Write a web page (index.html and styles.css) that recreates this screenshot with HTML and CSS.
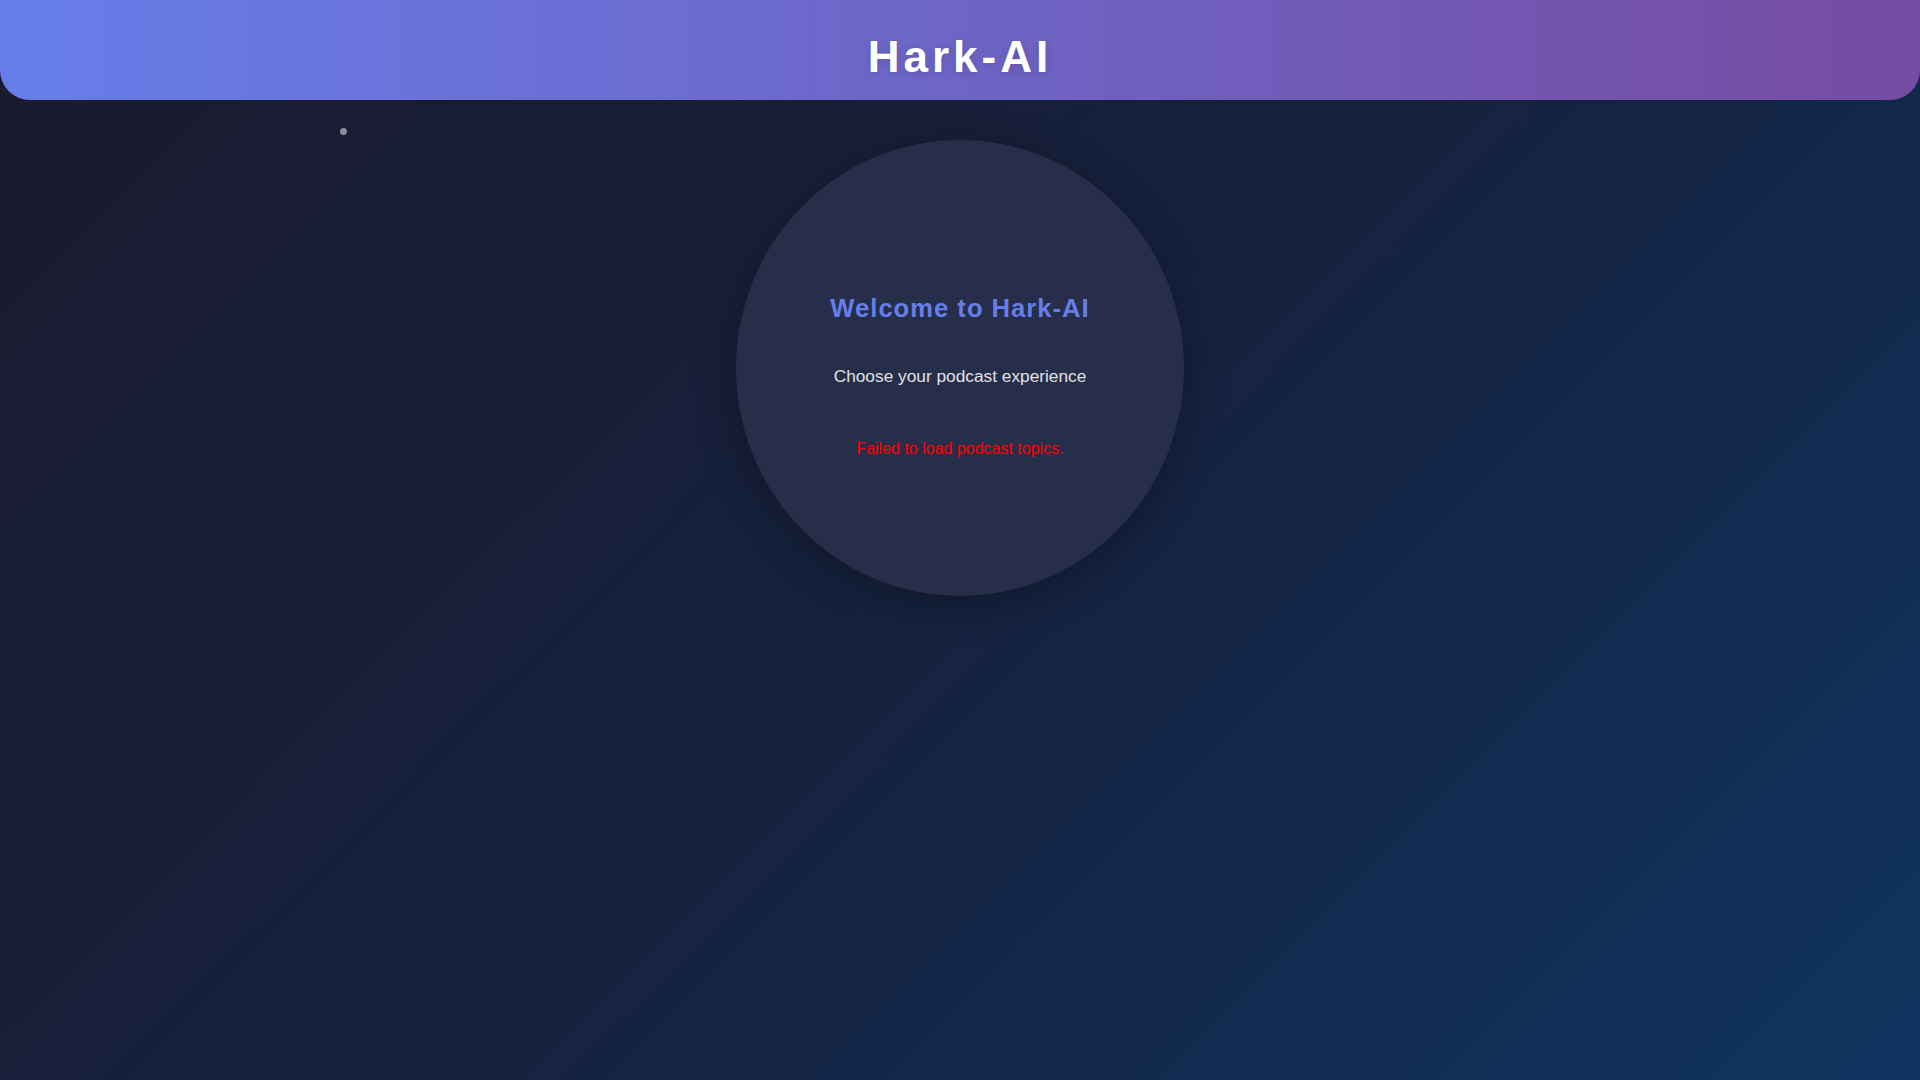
FILE: index.html
```html
<!DOCTYPE html>
<html lang="en">
<head>
<meta charset="utf-8">
<title>Hark-AI</title>
<link rel="stylesheet" href="styles.css">
</head>
<body>
<header class="app-header">
  <h1 class="app-title">Hark-AI</h1>
</header>
<main class="main">
  <div class="status-row"><span class="status-dot"></span></div>
  <section class="welcome-circle">
    <h2 class="welcome-title">Welcome to Hark-AI</h2>
    <p class="welcome-sub">Choose your podcast experience</p>
    <p class="error-msg">Failed to load podcast topics.</p>
  </section>
</main>
</body>
</html>
```
FILE: styles.css
```css
* { box-sizing: border-box; }
html, body { margin: 0; padding: 0; }
body {
  min-height: 100vh;
  font-family: "Liberation Sans", Arial, sans-serif;
  background: linear-gradient(135deg, #1a1a2e 0%, #16213e 50%, #0f3460 100%);
  color: #e0e0e0;
  overflow: hidden;
}
.app-header {
  height: 100px;
  padding-top: 32px;
  background: linear-gradient(90deg, #667eea 0%, #764ba2 100%);
  border-radius: 0 0 30px 30px;
  text-align: center;
}
.app-title {
  margin: 0;
  font-size: 44px;
  font-weight: 700;
  letter-spacing: 4px;
  line-height: normal;
  color: #ffffff;
  text-shadow: 0 2px 8px rgba(0, 0, 0, 0.15);
}
.main {
  position: relative;
  display: flex;
  flex-direction: column;
  align-items: center;
  padding-top: 40px;
}
.status-dot {
  position: absolute;
  left: 340px;
  top: 28px;
  width: 7px;
  height: 7px;
  border-radius: 50%;
  background: #8a8e9f;
}
.welcome-circle {
  width: 448px;
  height: 456px;
  border-radius: 50%;
  background: #272e49;
  box-shadow: 0 8px 40px rgba(0, 0, 0, 0.3);
  padding-top: 154px;
  text-align: center;
}
.welcome-title {
  margin: 0 0 43px;
  font-size: 25.6px;
  font-weight: 700;
  letter-spacing: 1px;
  line-height: normal;
  color: #667eea;
}
.welcome-sub {
  margin: 0 0 53px;
  font-size: 17.3px;
  line-height: normal;
  color: #e0e0e8;
}
.error-msg {
  margin: 0;
  font-size: 16px;
  line-height: normal;
  color: #ff0000;
}
```
